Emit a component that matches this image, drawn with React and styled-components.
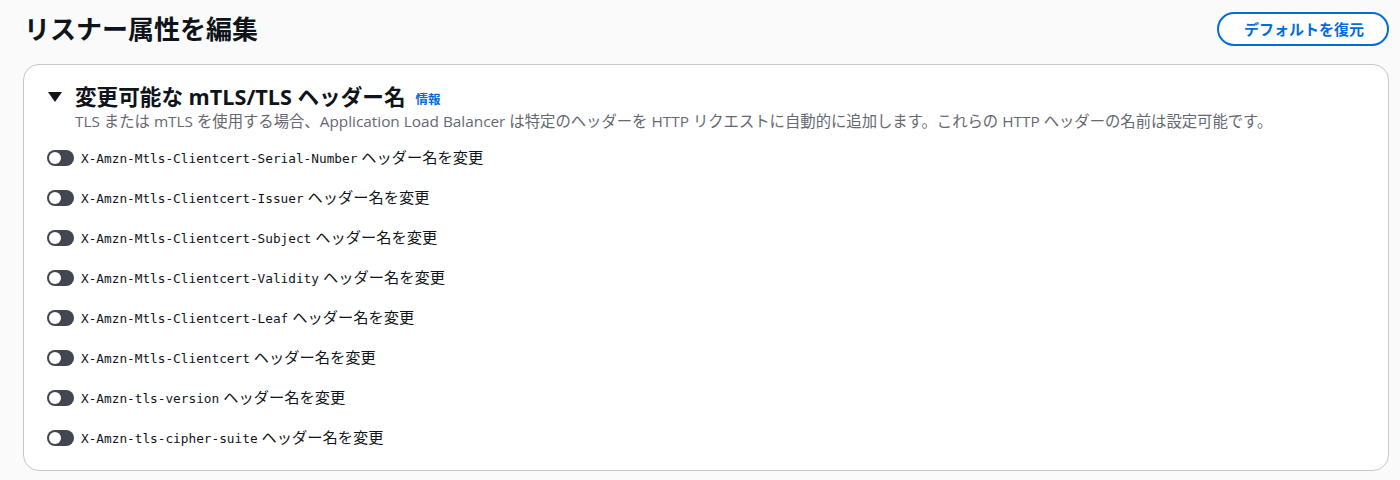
import React, { useState } from "react";
import styled, { createGlobalStyle } from "styled-components";

const headers = [
  "X-Amzn-Mtls-Clientcert-Serial-Number",
  "X-Amzn-Mtls-Clientcert-Issuer",
  "X-Amzn-Mtls-Clientcert-Subject",
  "X-Amzn-Mtls-Clientcert-Validity",
  "X-Amzn-Mtls-Clientcert-Leaf",
  "X-Amzn-Mtls-Clientcert",
  "X-Amzn-tls-version",
  "X-Amzn-tls-cipher-suite",
];

const App = () => {
  const [enabled, setEnabled] = useState({});

  const toggle = (name) => {
    setEnabled({
      ...enabled,
      [name]: !enabled[name],
    });
  };

  return (
    <Page>
      <GlobalStyle />
      <HeaderRow>
        <PageTitle>リスナー属性を編集</PageTitle>
        <RestoreButton type="button">デフォルトを復元</RestoreButton>
      </HeaderRow>
      <Card>
        <CardHeader>
          <Caret viewBox="0 0 14 12" aria-hidden="true">
            <polygon points="0,1 14,1 7,11" fill="#0f141a" />
          </Caret>
          <CardTitle>変更可能な mTLS/TLS ヘッダー名</CardTitle>
          <InfoLink href="#">情報</InfoLink>
        </CardHeader>
        <Description>
          TLS または mTLS を使用する場合、Application Load Balancer
          は特定のヘッダーを HTTP リクエストに自動的に追加します。これらの HTTP
          ヘッダーの名前は設定可能です。
        </Description>
        <ToggleList>
          {headers.map((name) => (
            <ToggleRow key={name} onClick={() => toggle(name)}>
              <Switch $on={!!enabled[name]}>
                <Knob $on={!!enabled[name]} />
              </Switch>
              <Label>
                <Mono>{name}</Mono> ヘッダー名を変更
              </Label>
            </ToggleRow>
          ))}
        </ToggleList>
      </Card>
    </Page>
  );
};

const GlobalStyle = createGlobalStyle`
  html, body {
    margin: 0;
    padding: 0;
    background: #fafafa;
  }
  body {
    font-family: "Open Sans", "Noto Sans CJK JP", sans-serif;
    color: #0f141a;
  }
`;

const Page = styled.div`
  width: 1400px;
  height: 480px;
  box-sizing: border-box;
  padding: 12px 11px 0 23px;
  background: #fafafa;
`;

const HeaderRow = styled.div`
  display: flex;
  justify-content: space-between;
  align-items: flex-start;
  height: 52px;
`;

const PageTitle = styled.h1`
  margin: 0;
  padding-left: 1px;
  font-size: 26px;
  line-height: 34px;
  font-weight: 700;
  color: #0f141a;
`;

const RestoreButton = styled.button`
  height: 34px;
  padding: 0 23px 0 25px;
  border: 2px solid #006ce0;
  border-radius: 20px;
  background: #ffffff;
  color: #006ce0;
  font-family: "Open Sans", "Noto Sans CJK JP", sans-serif;
  font-size: 15px;
  line-height: 28px;
  font-weight: 700;
  cursor: pointer;
`;

const Card = styled.section`
  box-sizing: border-box;
  width: 1366px;
  height: 407px;
  padding: 19px 24px 24px 24px;
  border: 1px solid #c6c6cd;
  border-radius: 16px;
  background: #ffffff;
`;

const CardHeader = styled.div`
  display: flex;
  align-items: center;
  height: 26px;
`;

const Caret = styled.svg`
  width: 14px;
  height: 12px;
  margin-right: 13px;
`;

const CardTitle = styled.h2`
  margin: 0;
  font-size: 21.6px;
  line-height: 26px;
  font-weight: 700;
`;

const InfoLink = styled.a`
  margin-left: 10px;
  margin-top: 3px;
  font-size: 12.5px;
  font-weight: 700;
  color: #006ce0;
  text-decoration: none;
`;

const Description = styled.p`
  margin: 1px 0 0 27px;
  font-size: 15.35px;
  line-height: 20px;
  color: #656871;
`;

const ToggleList = styled.div`
  display: flex;
  flex-direction: column;
  gap: 20px;
  margin-top: 17px;
`;

const ToggleRow = styled.label`
  display: flex;
  align-items: center;
  height: 20px;
  cursor: pointer;
`;

const Switch = styled.span`
  position: relative;
  box-sizing: border-box;
  width: 27px;
  height: 16px;
  margin-left: -1px;
  margin-right: 7px;
  border-radius: 8px;
  background: ${(props) => (props.$on ? "#006ce0" : "#424650")};
`;

const Knob = styled.span`
  position: absolute;
  top: 2px;
  left: ${(props) => (props.$on ? "13px" : "2px")};
  width: 12px;
  height: 12px;
  border-radius: 50%;
  background: #ffffff;
`;

const Label = styled.span`
  font-size: 15.25px;
  line-height: 20px;
  color: #0f141a;
`;

const Mono = styled.span`
  font-family: "DejaVu Sans Mono", "Liberation Mono", monospace;
  font-size: 12.75px;
`;

export default App;
